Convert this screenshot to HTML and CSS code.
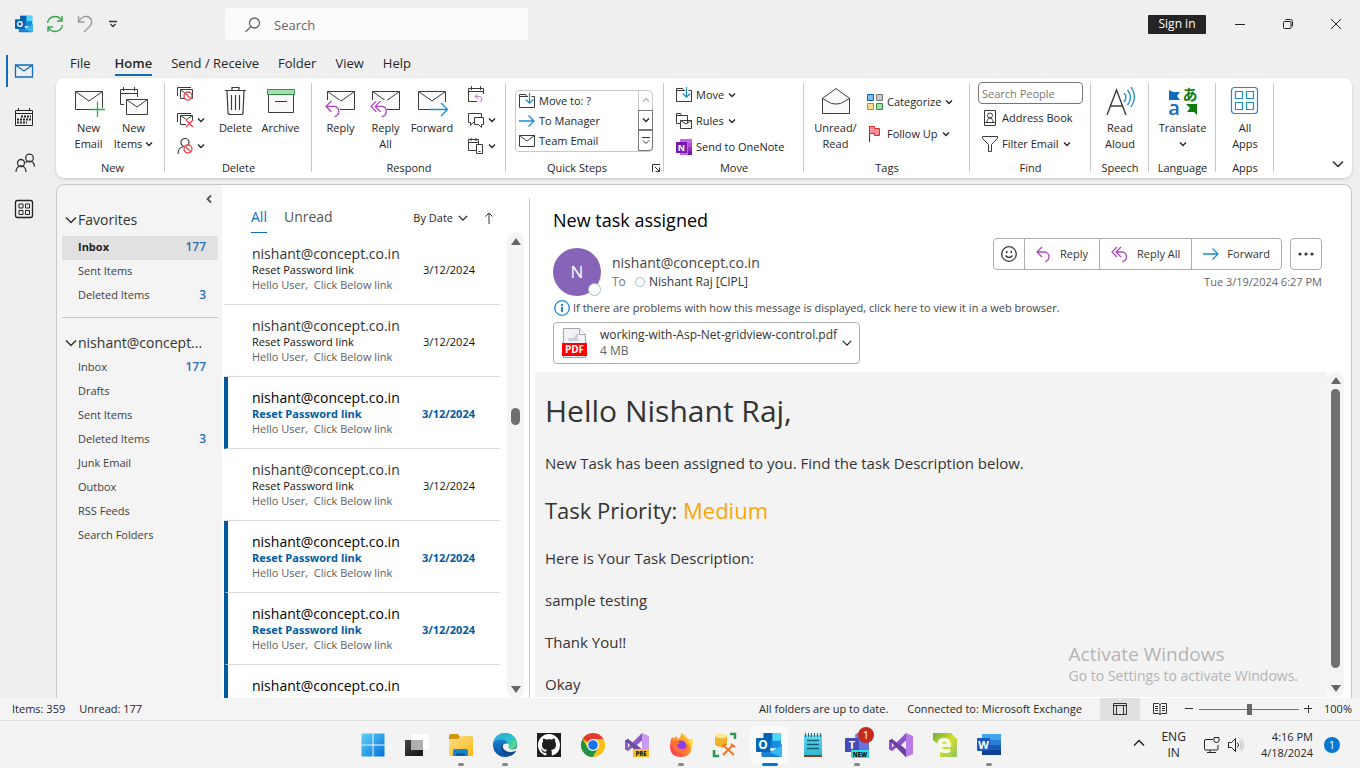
FILE: index.html
```html
<!DOCTYPE html>
<html lang="en">
<head>
<meta charset="utf-8">
<meta name="viewport" content="width=device-width, initial-scale=1">
<title>Inbox - Outlook</title>
<link rel="stylesheet" href="styles.css">
</head>
<body>
<svg class="defs" aria-hidden="true">
  <defs>
    <linearGradient id="g-win" x1="0" y1="0" x2="1" y2="1"><stop offset="0" stop-color="#5fd0fb"/><stop offset="1" stop-color="#0273d2"/></linearGradient>
    <linearGradient id="g-fold" x1="0" y1="0" x2="1" y2="1"><stop offset="0" stop-color="#ffe08a"/><stop offset="1" stop-color="#fbb81c"/></linearGradient>
    <linearGradient id="g-edge" x1="0" y1="0" x2="1" y2="1"><stop offset="0" stop-color="#2aa5dd"/><stop offset=".55" stop-color="#2fc3cb"/><stop offset="1" stop-color="#6ee35c"/></linearGradient>
    <linearGradient id="g-edge2" x1="0" y1="0" x2="0" y2="1"><stop offset="0" stop-color="#1b93dc"/><stop offset="1" stop-color="#0c4ea3"/></linearGradient>
    <linearGradient id="g-fox" x1="1" y1="0" x2="0" y2="1"><stop offset="0" stop-color="#ffe43c"/><stop offset=".45" stop-color="#ff9524"/><stop offset="1" stop-color="#f5255b"/></linearGradient>
    <linearGradient id="g-dark" x1="0" y1="0" x2="1" y2="1"><stop offset="0" stop-color="#444"/><stop offset="1" stop-color="#151515"/></linearGradient>
    <linearGradient id="g-note" x1="0" y1="0" x2="0" y2="1"><stop offset="0" stop-color="#63d8ec"/><stop offset="1" stop-color="#2eb6d3"/></linearGradient>
    <linearGradient id="g-green" x1="0" y1="0" x2="1" y2="1"><stop offset="0" stop-color="#6fae3c"/><stop offset=".5" stop-color="#cfe02a"/><stop offset="1" stop-color="#8fc46a"/></linearGradient>
  </defs>
  <symbol id="chev" viewBox="0 0 8 8"><path d="M1 2.500 4 5.500 7 2.500" fill="none" stroke="currentColor" stroke-width="1.400"/></symbol>
  <symbol id="chev-lg" viewBox="0 0 12 12"><path d="M1 3.500 6 8.500 11 3.500" fill="none" stroke="currentColor" stroke-width="1.500"/></symbol>
  <symbol id="mail" viewBox="0 0 32 32"><path d="M2.500 5.500h27v18h-27z" fill="#fafafa" stroke="#3b3b3b"/><path d="m2.500 5.500 13.500 9.500 13.500-9.500" fill="none" stroke="#3b3b3b"/></symbol>
  <symbol id="arrow-reply" viewBox="0 0 16 16"><path d="M6 1 1 6l5 5M1 6h8.500a5 5 0 0 1 0 9.500H9" fill="none" stroke="#b146c2" stroke-width="1.300"/></symbol>
  <symbol id="arrow-replyall" viewBox="0 0 18 16"><path d="M6 1 1 6l5 5M10 1 5 6l5 5M5 6h7a5 5 0 0 1 0 9.500h-1" fill="none" stroke="#b146c2" stroke-width="1.300"/></symbol>
  <symbol id="arrow-right" viewBox="0 0 16 16"><path d="M0 8h15M9.500 2.500 15 8l-5.500 5.500" fill="none" stroke="#1e8bcd" stroke-width="1.300"/></symbol>
  <symbol id="no" viewBox="0 0 10 10"><circle cx="5" cy="5" r="4" fill="#fff" stroke="#e8484d" stroke-width="1.300"/><path d="m2.200 2.200 5.600 5.600" stroke="#e8484d" stroke-width="1.300"/></symbol>
  <symbol id="move-folder" viewBox="0 0 16 16"><path d="M8 3.500 6.500 1.500h-6v13h15v-11h-3M8 3.500H.500M8 3.500h1" fill="none" stroke="#3b3b3b"/><path d="M10.500 0v10M6.800 6.500l3.700 3.700 3.700-3.700" fill="none" stroke="#1e8bcd" stroke-width="1.200"/></symbol>
  <symbol id="outlook" viewBox="0 0 24 24"><path d="M7 1h16v14H7z" fill="#1490df"/><path d="M15 1h8v7h-8z" fill="#50d9ff"/><path d="M7 1h8v7H7z" fill="#0a5fb0"/><path d="M7 8h8v6H7z" fill="#0f78d4"/><path d="m5 12 10 6 9-7v11a1 1 0 0 1-1 1H6a1 1 0 0 1-1-1z" fill="#1a80d4"/><path d="m24 12-11 7 10 4a1 1 0 0 0 1-1z" fill="#35b8f1"/><rect y="5.500" width="13" height="13" rx="1" fill="#0364b8"/><text x="6.500" y="16" class="logo-letter" fill="#fff">O</text></symbol>
</svg>

<header class="titlebar">
  <div class="quick">
    <svg width="18" height="18"><use href="#outlook"/></svg>
    <button aria-label="Send and receive"><svg width="18" height="18" viewBox="0 0 18 18" fill="none" stroke="#37a550" stroke-width="1.400"><path d="M1.500 8A7.500 7.500 0 0 1 15.500 5.500M16.500 10A7.500 7.500 0 0 1 2.500 12.500M16 1v5h-5M2 17v-5h5"/></svg></button>
    <button aria-label="Undo"><svg width="16" height="18" viewBox="0 0 16 18" fill="none" stroke="#9b9b9b" stroke-width="1.400"><path d="M1.500 1v6h6M1.500 7C4 3 7 1 10 1.500c5 1 6 6 3 9.500l-6 6"/></svg></button>
    <button aria-label="Customize toolbar"><svg width="8" height="8" viewBox="0 0 8 8" fill="none" stroke="#333" stroke-width="1.300"><path d="M0 1.500h8M1.500 4 4 6.500 6.500 4"/></svg></button>
  </div>
  <label class="search"><svg width="16" height="16" viewBox="0 0 16 16" fill="none" stroke="#666" stroke-width="1.300"><circle cx="9.500" cy="6" r="5"/><path d="M6 9.500.500 15"/></svg><input type="search" placeholder="Search" aria-label="Search"></label>
  <button class="signin">Sign in</button>
  <div class="wincontrols">
    <button aria-label="Minimize"><svg width="10" height="10" viewBox="0 0 10 10"><path d="M0 5.500h10" stroke="#222"/></svg></button>
    <button aria-label="Restore"><svg width="10" height="10" viewBox="0 0 10 10" fill="none" stroke="#222"><rect x=".5" y="2.500" width="7.500" height="7" rx="1"/><path d="M2.500.500h5a2 2 0 0 1 2 2v5"/></svg></button>
    <button aria-label="Close"><svg width="10" height="10" viewBox="0 0 10 10"><path d="m0 0 10 10M10 0 0 10" stroke="#222"/></svg></button>
  </div>
</header>

<div class="middle">
  <nav class="rail" aria-label="Modules">
    <a href="#mail" class="active" aria-label="Mail"><svg width="18" height="18" viewBox="0 0 18 18" fill="none" stroke="#0f6cbd" stroke-width="1.300"><path d="M.500 3h17v12H.500zM.500 3 9 9l8.500-6"/></svg></a>
    <a href="#calendar" aria-label="Calendar"><svg width="18" height="18" viewBox="0 0 18 18" fill="none" stroke="#242424"><path d="M.500 2.500h17v15H.500zM.500 5.500h17M3.500 0v3M14.500 0v3"/><path d="M6 8.500h10M2 11.500h14M2 14.500h10" stroke-width="2" stroke-dasharray="2 1"/></svg></a>
    <a href="#people" aria-label="People"><svg width="20" height="20" viewBox="0 0 20 20" fill="none" stroke="#333" stroke-width="1.300"><circle cx="6" cy="10" r="3.500"/><path d="M1 19c0-8 10-8 10 0"/><circle cx="14.500" cy="5" r="3.800"/><path d="M10.500 9.500c4-3 9-1 9 4"/></svg></a>
    <a href="#apps" aria-label="Apps"><svg width="18" height="18" viewBox="0 0 18 18" fill="none" stroke="#242424"><rect x=".5" y=".5" width="17" height="17" rx="2" stroke-width="1.300"/><path d="M4 4h4v4H4zM10.500 4h4v4h-4zM4 10.500h4v4H4zM10.500 10.500h4v4h-4z"/></svg></a>
  </nav>

  <div class="content">
    <nav class="tabs" aria-label="Ribbon tabs">
      <button>File</button><button class="active">Home</button><button>Send / Receive</button><button>Folder</button><button>View</button><button>Help</button>
    </nav>

    <div class="ribbon">
      <section class="group g-new">
        <div class="tools">
          <button class="big"><svg width="32" height="32" viewBox="0 0 32 32"><use href="#mail"/><path d="M17 24h15M24.500 16v15" stroke="#fff" stroke-width="4"/><path d="M16.500 23.500H32M24.500 15.500V31" stroke="#37a550" stroke-width="1.300"/></svg><span>New<br>Email</span></button>
          <button class="big"><svg width="32" height="32" viewBox="0 0 32 32" fill="#fafafa" stroke="#3b3b3b"><path d="M2.500 3.500h17v15h-17zM2.500 7.500h17M5.500 1v4M16.500 1v4"/><path d="M6 11h24v18H6z" fill="#fff" stroke="none"/><path d="M8.500 13.500h21v15h-21zM8.500 13.500 19 21l10.500-7.500"/></svg><span>New<br>Items <svg width="8" height="8"><use href="#chev"/></svg></span></button>
        </div><h2>New</h2>
      </section>
      <section class="group g-delete">
        <div class="tools">
          <div class="stack">
            <button aria-label="Ignore"><svg width="16" height="16" viewBox="0 0 16 16" fill="none" stroke="#3b3b3b"><path d="M.500 10V1.500H14M3.500 3.500h12v9h-12zM3.500 3.500 9 8"/><use href="#no" x="6" y="5" width="10" height="10"/></svg></button>
            <button aria-label="Clean up"><svg width="16" height="16" viewBox="0 0 16 16" fill="none" stroke="#3b3b3b"><path d="M.500 10V1.500H14M9 12.500H3.500v-9h12V8M3.500 3.500l6 4 6-4"/><path d="m9 8 7 7M16 8l-7 7" stroke="#e8484d" stroke-width="1.300"/></svg><svg width="8" height="8"><use href="#chev"/></svg></button>
            <button aria-label="Junk"><svg width="16" height="16" viewBox="0 0 16 16" fill="none" stroke="#3b3b3b" stroke-width="1.200"><circle cx="8" cy="4.500" r="4"/><path d="M1 16c0-4 2-7 5-7"/><use href="#no" x="6" y="6" width="10" height="10"/></svg><svg width="8" height="8"><use href="#chev"/></svg></button>
          </div>
          <button class="big"><svg width="32" height="32" viewBox="0 0 32 32" fill="none" stroke="#3b3b3b" stroke-width="1.200"><path d="M5 4.500h21M12 4V1.500h7V4M7 4.500l1 22q0 2 2 2h11q2 0 2-2l1-22M11.500 9v15M15.500 9v15M19.500 9v15"/></svg><span>Delete</span></button>
          <button class="big"><svg width="32" height="32" viewBox="0 0 32 32"><path d="M3.500 7.500h25v19h-25z" fill="#fafafa" stroke="#3b3b3b"/><path d="M2.500 3.500h27v5h-27z" fill="#a5dfb2" stroke="#309048"/><path d="M10 15.500h12" stroke="#3b3b3b"/></svg><span>Archive</span></button>
        </div><h2>Delete</h2>
      </section>
      <section class="group g-respond">
        <div class="tools">
          <button class="big"><svg width="32" height="32" viewBox="0 0 32 32"><use href="#mail"/><path d="M0 14h15v12H0z" fill="#fff"/><use href="#arrow-reply" x="0" y="14" width="17" height="17"/></svg><span>Reply</span></button>
          <button class="big"><svg width="32" height="32" viewBox="0 0 32 32"><use href="#mail"/><path d="M0 14h17v12H0z" fill="#fff"/><use href="#arrow-replyall" x="0" y="14" width="19" height="17"/></svg><span>Reply<br>All</span></button>
          <button class="big wide"><svg width="32" height="32" viewBox="0 0 32 32"><use href="#mail"/><path d="M14 22h18v5H14zM24 16h8v8h-8z" fill="#fff"/><path d="M14 23.500h17.500M25 17l6.500 6.500L25 30" fill="none" stroke="#1e8bcd" stroke-width="1.300"/></svg><span>Forward</span></button>
          <div class="stack">
            <button aria-label="Meeting"><svg width="16" height="16" viewBox="0 0 16 16" fill="none" stroke="#3b3b3b"><path d="M9 15.500H.500v-13h15V8M.500 5.500h15M3.500 0v4M12.500 0v4"/><use href="#arrow-reply" x="6" y="7" width="10" height="9"/></svg></button>
            <button aria-label="Messages"><svg width="16" height="16" viewBox="0 0 16 16" fill="#fff" stroke="#3b3b3b"><path d="M.500 1.500h13v9H5l-2.500 3v-3h-2z"/><path d="M6.500 5.500h9v7h-2v3l-3-3h-4z"/></svg><svg width="8" height="8"><use href="#chev"/></svg></button>
            <button aria-label="More respond actions"><svg width="16" height="16" viewBox="0 0 16 16" fill="#fff" stroke="#3b3b3b"><path d="M.500 1.500h10v11H.500zM.500 4.500h10M3 0v3M8 0v3"/><path d="M8.500 6.500h6v9h-6zM10.500 13.500h2"/></svg><svg width="8" height="8"><use href="#chev"/></svg></button>
          </div>
        </div><h2>Respond</h2>
      </section>
      <section class="group g-quick">
        <div class="quickbox">
          <div class="steps">
            <button><svg width="16" height="16"><use href="#move-folder"/></svg>Move to: ?</button>
            <button><svg width="16" height="16"><use href="#arrow-right"/></svg>To Manager</button>
            <button><svg width="16" height="16" viewBox="0 0 16 16" fill="none" stroke="#3b3b3b"><path d="M.500 2.500h15v11H.500zM.500 2.500 8 8l7.500-5.500"/></svg>Team Email</button>
          </div>
          <div class="spin">
            <button aria-label="Previous" disabled><svg class="flip" width="8" height="8"><use href="#chev"/></svg></button>
            <button aria-label="Next"><svg width="8" height="8"><use href="#chev"/></svg></button>
            <button aria-label="More quick steps"><svg width="8" height="8" viewBox="0 0 8 8" fill="none" stroke="#333"><path d="M0 .500h8M1 3.500l3 3 3-3"/></svg></button>
          </div>
        </div>
        <h2>Quick Steps</h2>
        <button class="launch" aria-label="Quick Steps settings"><svg width="8" height="8" viewBox="0 0 8 8" fill="none" stroke="#333"><path d="M.500 8V.500H8M2.500 2.500l5 5M7.500 3.500v4h-4"/></svg></button>
      </section>
      <section class="group g-move">
        <div class="list">
          <button><svg width="16" height="16"><use href="#move-folder"/></svg>Move <svg width="8" height="8"><use href="#chev"/></svg></button>
          <button><svg width="16" height="16" viewBox="0 0 16 16" fill="#fff" stroke="#3b3b3b"><path d="M.500 .500h4l1 2h6v8H.500zM.500 2.500h5"/><path d="M4.500 7.500h11v8h-11zM4.500 7.500 10 11l5.500-3.500"/></svg>Rules <svg width="8" height="8"><use href="#chev"/></svg></button>
          <button><svg width="16" height="16" viewBox="0 0 16 16"><path d="M4 0h12v16H4z" fill="#ca64ea"/><path d="M12 4h4v4h-4z" fill="#ae4bd5"/><path d="M12 8h4v4h-4z" fill="#9332bf"/><path d="M12 12h4v4h-4z" fill="#7719aa"/><path d="M0 3h11v11H0z" fill="#7719aa"/><text x="5.500" y="12" class="note-letter" fill="#fff">N</text></svg>Send to OneNote</button>
        </div><h2>Move</h2>
      </section>
      <section class="group g-tags">
        <div class="tools">
          <button class="big"><svg width="32" height="32" viewBox="0 0 32 32" fill="#fafafa" stroke="#3b3b3b"><path d="M2.500 12.500 16 2.500l13.500 10v15h-27z"/><path d="m2.500 12.500 9 5q4.500 1 9 0l9-5" fill="none"/></svg><span>Unread/<br>Read</span></button>
          <div class="list roomy">
            <button><svg width="16" height="16" viewBox="0 0 16 16"><path d="M.500.500h6v6h-6z" fill="#83beec" stroke="#0063b1"/><path d="M9.500.500h6v6h-6z" fill="#c8c8c8" stroke="#797774"/><path d="M.500 9.500h6v6h-6z" fill="#ffdb8c" stroke="#e07a10"/><path d="M9.500 9.500h6v6h-6z" fill="#a1ddaa" stroke="#309048"/></svg>Categorize <svg width="8" height="8"><use href="#chev"/></svg></button>
            <button><svg width="16" height="16" viewBox="0 0 16 16"><path d="M2.500 0v16" stroke="#3b3b3b"/><path d="M2.500.500h5v2h5v7h-5v-2h-5z" fill="#ff9198" stroke="#d92c20"/></svg>Follow Up <svg width="8" height="8"><use href="#chev"/></svg></button>
          </div>
        </div><h2>Tags</h2>
      </section>
      <section class="group g-find">
        <div class="list find">
          <input type="text" placeholder="Search People" aria-label="Search People">
          <button><svg width="16" height="16" viewBox="0 0 16 16" fill="none" stroke="#3b3b3b"><path d="M2.500.500h11v15h-11zM2.500 12.500h11M5 12c0-5 6-5 6 0"/><circle cx="8" cy="5.500" r="2.500"/></svg>Address Book</button>
          <button><svg width="16" height="16" viewBox="0 0 16 16" fill="none" stroke="#3b3b3b"><path d="M.500.500h15v2l-6 6v7h-3v-7l-6-6z"/></svg>Filter Email <svg width="8" height="8"><use href="#chev"/></svg></button>
        </div><h2>Find</h2>
      </section>
      <section class="group g-speech">
        <div class="tools"><button class="big"><svg width="32" height="32" viewBox="0 0 32 32" fill="none"><path d="M3 29 12.500 4 22 29M6 20h13" stroke="#3b3b3b" stroke-width="1.400"/><path d="M20 7q4 4 0 9M23.500 4q6 7 0 15M27 1q7 10 0 20" stroke="#1e8bcd" stroke-width="1.300"/></svg><span>Read<br>Aloud</span></button></div><h2>Speech</h2>
      </section>
      <section class="group g-language">
        <div class="tools"><button class="big"><svg width="32" height="32" viewBox="0 0 32 32"><path d="M2 4l4 2h7l-3 4 3 4H2z" fill="#0f6cbd"/><path d="M30 29v-11H19l4 4-3 4h7z" fill="#107c10"/><text x="7" y="29" class="tr-a" fill="#0f6cbd">a</text><text x="23" y="14" class="tr-ja" fill="#107c10">あ</text></svg><span>Translate<br><svg width="8" height="8"><use href="#chev"/></svg></span></button></div><h2>Language</h2>
      </section>
      <section class="group g-apps">
        <div class="tools"><button class="big"><svg width="32" height="32" viewBox="0 0 32 32" fill="none" stroke="#1e8bcd" stroke-width="1.200"><rect x="2.500" y="1.500" width="26" height="26" rx="3"/><path d="M6.500 5.500h7v7h-7zM17.500 5.500h7v7h-7zM6.500 16.500h7v7h-7zM17.500 16.500h7v7h-7z"/></svg><span>All<br>Apps</span></button></div><h2>Apps</h2>
      </section>
      <button class="collapse" aria-label="Collapse ribbon"><svg width="12" height="12"><use href="#chev-lg"/></svg></button>
    </div>

    <main class="workspace">
      <nav class="folders" aria-label="Folders">
        <button class="fold" aria-label="Collapse folder pane"><svg width="6" height="8" viewBox="0 0 6 8"><path d="M5 .500 1.500 4 5 7.500" fill="none" stroke="#555" stroke-width="1.800"/></svg></button>
        <h3><svg width="12" height="12"><use href="#chev-lg"/></svg>Favorites</h3>
        <ul>
          <li class="current"><a href="#inbox">Inbox</a><b>177</b></li>
          <li><a href="#sent">Sent Items</a></li>
          <li><a href="#deleted">Deleted Items</a><b>3</b></li>
        </ul>
        <hr>
        <h3><svg width="12" height="12"><use href="#chev-lg"/></svg>nishant@concept...</h3>
        <ul>
          <li><a href="#inbox">Inbox</a><b>177</b></li>
          <li><a href="#drafts">Drafts</a></li>
          <li><a href="#sent">Sent Items</a></li>
          <li><a href="#deleted">Deleted Items</a><b>3</b></li>
          <li><a href="#junk">Junk Email</a></li>
          <li><a href="#outbox">Outbox</a></li>
          <li><a href="#rss">RSS Feeds</a></li>
          <li><a href="#searches">Search Folders</a></li>
        </ul>
      </nav>

      <section class="messages" aria-label="Messages">
        <header>
          <button class="filter active">All</button><button class="filter">Unread</button>
          <button class="sort">By Date <svg width="10" height="10"><use href="#chev-lg"/></svg></button>
          <button aria-label="Oldest on top"><svg width="8" height="12" viewBox="0 0 8 12" fill="none" stroke="#333"><path d="M4 12V1M.500 4.500 4 1l3.500 3.500"/></svg></button>
        </header>
        <div class="scrollarea">
          <ol>
            <li><strong>nishant@concept.co.in</strong><p class="subject"><span>Reset Password link</span><time>3/12/2024</time></p><p>Hello User,&nbsp; Click Below link</p></li>
            <li><strong>nishant@concept.co.in</strong><p class="subject"><span>Reset Password link</span><time>3/12/2024</time></p><p>Hello User,&nbsp; Click Below link</p></li>
            <li class="unread"><strong>nishant@concept.co.in</strong><p class="subject"><span>Reset Password link</span><time>3/12/2024</time></p><p>Hello User,&nbsp; Click Below link</p></li>
            <li><strong>nishant@concept.co.in</strong><p class="subject"><span>Reset Password link</span><time>3/12/2024</time></p><p>Hello User,&nbsp; Click Below link</p></li>
            <li class="unread"><strong>nishant@concept.co.in</strong><p class="subject"><span>Reset Password link</span><time>3/12/2024</time></p><p>Hello User,&nbsp; Click Below link</p></li>
            <li class="unread"><strong>nishant@concept.co.in</strong><p class="subject"><span>Reset Password link</span><time>3/12/2024</time></p><p>Hello User,&nbsp; Click Below link</p></li>
            <li class="unread"><strong>nishant@concept.co.in</strong></li>
          </ol>
          <div class="scrollbar"><i class="up"></i><div class="track"><i class="thumb small"></i></div><i class="down"></i></div>
        </div>
      </section>

      <article class="reading">
        <div class="mailhead">
          <h1>New task assigned</h1>
          <div class="senderrow">
            <div class="avatar">N<i></i></div>
            <div class="who"><strong>nishant@concept.co.in</strong><p><span>To</span><i></i>Nishant Raj [CIPL]</p></div>
            <div class="actions">
              <div class="btnrow">
                <div class="joined">
                  <button aria-label="React"><svg width="16" height="16" viewBox="0 0 16 16" fill="none" stroke="#3b3b3b" stroke-width="1.300"><circle cx="8" cy="8" r="7.300"/><path d="M4.500 9.500q3.500 4 7 0"/><path d="M5 6h1.500M9.500 6H11" stroke-width="1.800"/></svg></button>
                  <button><svg width="16" height="16"><use href="#arrow-reply"/></svg>Reply</button>
                  <button><svg width="18" height="16"><use href="#arrow-replyall"/></svg>Reply All</button>
                  <button><svg width="16" height="16"><use href="#arrow-right"/></svg>Forward</button>
                </div>
                <button class="more" aria-label="More actions"><svg width="16" height="4" viewBox="0 0 16 4" fill="#333"><circle cx="2" cy="2" r="1.600"/><circle cx="8" cy="2" r="1.600"/><circle cx="14" cy="2" r="1.600"/></svg></button>
              </div>
              <time>Tue 3/19/2024 6:27 PM</time>
            </div>
          </div>
          <p class="info"><svg width="16" height="16" viewBox="0 0 16 16"><circle cx="8" cy="8" r="7.300" fill="none" stroke="#1e8bcd" stroke-width="1.300"/><path d="M8 4v2M8 7v5" stroke="#1e8bcd" stroke-width="2"/></svg>If there are problems with how this message is displayed, click here to view it in a web browser.</p>
          <button class="attachment">
            <svg width="26" height="32" viewBox="0 0 26 32"><path d="M1.500 1.500h16l6 6v23h-22z" fill="#f2f3f6" stroke="#a2a5ad"/><path d="M17.500 1.500v6h6" fill="#fff" stroke="#a2a5ad"/><path d="M6 14q0-4 3-3t5-4q3-1 2 3t3 4z" fill="#cdd1d8"/><path d="M0 16h25v13H0z" fill="#f00"/><text x="12.500" y="26" class="pdf" fill="#fff">PDF</text></svg>
            <span>working-with-Asp-Net-gridview-control.pdf<small>4 MB</small></span>
            <svg width="10" height="10"><use href="#chev-lg"/></svg>
          </button>
        </div>
        <div class="bodyrow">
          <div class="mailbody">
            <h1>Hello Nishant Raj,</h1>
            <p>New Task has been assigned to you. Find the task Description below.</p>
            <h2>Task Priority: <em>Medium</em></h2>
            <p>Here is Your Task Description:</p>
            <p>sample testing</p>
            <p>Thank You!!</p>
            <p>Okay</p>
          </div>
          <div class="scrollbar"><i class="up"></i><div class="track"><i class="thumb large"></i></div><i class="down"></i></div>
          <div class="watermark"><strong>Activate Windows</strong><span>Go to Settings to activate Windows.</span></div>
        </div>
      </article>
    </main>
  </div>
</div>

<footer class="status">
  <span>Items: 359</span><span>Unread: 177</span>
  <span class="sync">All folders are up to date.</span><span class="conn">Connected to: Microsoft Exchange</span>
  <button class="view on" aria-label="Normal view"><svg width="14" height="12" viewBox="0 0 14 12" fill="none" stroke="#333"><path d="M.500.500h13v11H.500zM.500 2.500h13M3.500 2.500v9M10.500 2.500v9"/></svg></button>
  <button class="view" aria-label="Reading view"><svg width="14" height="12" viewBox="0 0 14 12" fill="none" stroke="#333"><path d="M.500.500h5L7 1.500 8.500.500h5v10h-5L7 12l-1.500-1.500h-5zM7 1.500V12M2 3.500h3M2 5.500h3M2 7.500h3M9 3.500h3M9 5.500h3M9 7.500h3"/></svg></button>
  <button class="step" aria-label="Zoom out"><svg width="8" height="8" viewBox="0 0 8 8"><path d="M0 3.500h8" stroke="#333"/></svg></button>
  <input type="range" min="0" max="100" value="50" aria-label="Zoom">
  <button class="step" aria-label="Zoom in"><svg width="8" height="8" viewBox="0 0 8 8"><path d="M0 3.500h8M4.500 0v8" stroke="#333"/></svg></button>
  <span class="pct">100%</span>
</footer>

<footer class="taskbar">
  <div class="apps">
    <button aria-label="Start"><svg width="24" height="24" viewBox="0 0 24 24" fill="url(#g-win)"><path d="M.500.500h11v11H.500zM12.500.500h11v11h-11zM.500 12.500h11v11H.500zM12.500 12.500h11v11h-11z"/></svg></button>
    <button aria-label="Task view"><svg width="24" height="24" viewBox="0 0 24 24"><path d="M0 7h18v16H0z" fill="url(#g-dark)"/><path d="M6 1h18v16H6z" fill="#fff" opacity=".85"/><path d="M6 7h12v10H6z" fill="#b0b0b0"/></svg></button>
    <button class="run" aria-label="File Explorer"><svg width="24" height="24" viewBox="0 0 24 24"><path d="M0 3q0-2 2-2h7l2 3v3H0z" fill="#d89208"/><path d="M0 6h9l3-3h11l1 1v18l-1 1H1l-1-1z" fill="url(#g-fold)"/><path d="M4 18q0-2 2-2h11q2 0 2 2v5H4z" fill="#1786cf"/><path d="M7 20h9v3H7z" fill="#0a5c9b"/></svg></button>
    <button class="run" aria-label="Edge"><svg width="24" height="24" viewBox="0 0 24 24"><circle cx="12" cy="12" r="12" fill="url(#g-edge2)"/><path d="M0 10C2 3 7 0 12 0c8 0 12 6 12 10 0 4-3 6-6 6-4 0-5-2-3-4 0-7-12-7-15-2z" fill="url(#g-edge)"/><path d="M9 11c-2 5 1 12 8 12 3-1 5-3 6-5-6 3-12 0-12-5z" fill="#114a8b"/><path d="M10 12c-1 4 3 7 8 7 2 0 4-1 5-2l2-3c-4 4-12 3-9-2-1-2-4-2-6 0z" fill="#f3f3f3"/></svg></button>
    <button aria-label="GitHub"><svg width="24" height="24" viewBox="0 0 24 24"><path d="M0 0h24v24H0z" fill="#201d1e"/><path transform="translate(1 1) scale(1.375)" fill="#fff" d="M8 0C3.580 0 0 3.580 0 8c0 3.540 2.290 6.530 5.470 7.590.4.070.55-.17.55-.38 0-.19-.01-.82-.01-1.490-2.010.37-2.530-.49-2.690-.94-.09-.23-.48-.94-.82-1.130-.28-.15-.68-.52-.01-.53.63-.01 1.080.58 1.230.82.72 1.210 1.870.87 2.330.66.070-.52.28-.87.51-1.070-1.780-.2-3.640-.89-3.640-3.950 0-.87.31-1.590.82-2.150-.08-.2-.36-1.020.08-2.120 0 0 .67-.21 2.200.82.64-.18 1.320-.27 2-.27.68 0 1.360.09 2 .27 1.530-1.040 2.200-.82 2.200-.82.44 1.100.16 1.920.08 2.120.51.56.82 1.270.82 2.150 0 3.070-1.870 3.750-3.650 3.950.29.25.54.73.54 1.480 0 1.070-.01 1.930-.01 2.200 0 .21.15.46.55.38A8.010 8.010 0 0 0 16 8c0-4.420-3.580-8-8-8z"/></svg></button>
    <button aria-label="Chrome"><svg width="24" height="24" viewBox="0 0 24 24"><circle cx="12" cy="12" r="12" fill="#fbc116"/><path d="M12 12 1.600 6A12 12 0 0 1 22.400 6z" fill="#e33b2e"/><path d="M1.600 6A12 12 0 0 0 12 24l5.200-9L12 12l-5.200 3z" fill="#229342"/><path d="M12 6h10.400q3 6 0 12L12 24l5.200-9z" fill="#fbc116"/><circle cx="12" cy="12" r="6" fill="#fff"/><circle cx="12" cy="12" r="4.800" fill="#1a73e8"/></svg></button>
    <button aria-label="Visual Studio Preview"><svg width="24" height="24" viewBox="0 0 24 24"><path fill-rule="evenodd" d="M17 0v24L7.500 14.500 3 18l-3-1.500v-9L3 6l4.500 3.500zM17 7.500 12 12l5 4.500zM3 9.500v5L5.200 12z" fill="#8a5cc4"/><path d="m0 7.500 3-1.500 14 11v7L3 10z" fill="#6b4da0"/><path d="M17 0l7 3v18l-7 3z" fill="#c89bf5"/><path d="M8 16h16v8H8z" fill="#f9be25"/><text x="16" y="22.500" class="pre" fill="#222">PRE</text></svg></button>
    <button class="run" aria-label="Firefox"><svg width="24" height="24" viewBox="0 0 24 24"><path d="M2 6 4 4l1 2 2-3 2 3q3-2 3-6 5 2 6 5 4 2 5 6 0 13-11 13T1 13z" fill="url(#g-fox)"/><circle cx="12" cy="13" r="5.500" fill="#8a40e8"/><path d="M5 8q4 0 6 2l-3 2q1 4 5 4 5 0 5-5l2 3q-1 6-8 6-9-2-7-12z" fill="#ff7139"/><path d="M14 1q5 3 5 8 4-2 3-5 4 6 0 10-2-7-8-13z" fill="#ffdc3e"/></svg></button>
    <button aria-label="Database tool"><svg width="24" height="24" viewBox="0 0 24 24"><path d="M2 3v9q6 4 12 0V3z" fill="#f2b229"/><ellipse cx="8" cy="3" rx="6" ry="2.500" fill="#ffe394"/><path d="M17 1h5v5M1 17v6h5" fill="none" stroke="#2f9750" stroke-width="2.500"/><path d="m10 12 11 10M20 12 10 22" stroke="#ef7322" stroke-width="1.800"/><path d="m9 14 4-3M18 11l4 3" stroke="#ef7322" stroke-width="2"/></svg></button>
    <button class="open" aria-label="Outlook"><svg width="26" height="26"><use href="#outlook"/></svg></button>
    <button aria-label="Notepad"><svg width="24" height="24" viewBox="0 0 24 24"><path d="M3 2h18v21H3z" fill="url(#g-note)"/><path d="M3 22h18v2H3z" fill="#8e3d1c"/><path d="M4.500 0v4M7.500 0v4M10.500 0v4M13.500 0v4M16.500 0v4M19.500 0v4" stroke="#176c7d"/><path d="M6 7.500h12M6 11.500h12M6 15.500h12" stroke="#175d78" stroke-width="1.500"/></svg></button>
    <button class="run" aria-label="Teams"><svg width="24" height="24" viewBox="0 0 24 24"><rect x="6" y="6" width="18" height="16" rx="2" fill="#6871df"/><circle cx="13" cy="3" r="3" fill="#7780e0"/><rect y="5" width="14" height="14" rx="1" fill="#444bb4"/><text x="7" y="16" class="logo-letter" fill="#fff">T</text><rect x="6" y="17" width="18" height="8" rx="1" fill="#2ce2e3"/><text x="15" y="23.500" class="pre" fill="#111">NEW</text></svg><i class="badge">1</i></button>
    <button aria-label="Visual Studio"><svg width="24" height="24" viewBox="0 0 24 24"><path fill-rule="evenodd" d="M17 0v24L7.500 14.500 3 18l-3-1.500v-9L3 6l4.500 3.500zM17 7.500 12 12l5 4.500zM3 9.500v5L5.200 12z" fill="#9050cc"/><path d="m0 7.500 3-1.500 14 11v7L3 10z" fill="#68419b"/><path d="M17 0l7 3v18l-7 3z" fill="#b67be8"/></svg></button>
    <button aria-label="Editor"><svg width="24" height="24" viewBox="0 0 24 24"><path d="M0 0h18l6 6v18H7V13L0 7z" fill="url(#g-green)"/><text x="11" y="20" class="e-letter" fill="#f5f8e8">e</text></svg></button>
    <button class="run" aria-label="Word"><svg width="24" height="24" viewBox="0 0 24 24"><path d="M5 1h19v6H5z" fill="#41a5ee"/><path d="M5 7h19v5H5z" fill="#2b7cd3"/><path d="M5 12h19v5H5z" fill="#185abd"/><path d="M5 17h19v5H5z" fill="#103f91"/><rect y="5" width="13" height="13" rx="1" fill="#185abd"/><text x="6.500" y="15.500" class="logo-letter" fill="#fff">W</text></svg></button>
  </div>
  <div class="tray">
    <button aria-label="Hidden icons"><svg class="flip" width="12" height="12"><use href="#chev-lg"/></svg></button>
    <button class="lang">ENG<br>IN</button>
    <button class="net" aria-label="Network and volume"><svg width="16" height="16" viewBox="0 0 16 16" fill="none" stroke="#222"><path d="M9 2.500H2q-1.500 0-1.500 1.500v7.500q0 1.500 1.500 1.500h11q1 0 1-1V8M3 15.500h9M6 13v2M10 .500h5v3q0 2-2.500 2T10 3.500z"/></svg><svg width="16" height="16" viewBox="0 0 16 16" fill="none" stroke="#222"><path d="M1.500 5.500h3l4-4v13l-4-4h-3z"/><path d="M10.500 5.500q2 2.500 0 5"/><path d="M12.500 3.500q3 4.500 0 9M14 2q4 6 0 12" stroke="#bbb"/></svg></button>
    <button class="clock">4:16 PM<br>4/18/2024</button>
    <button class="count">1</button>
  </div>
</footer>
</body>
</html>
```

FILE: styles.css
```css
:root {
  --ink: #262626;
  --muted: #5f5f5f;
  --blue: #0f6cbd;
  --line: #c9c9c9;
}
* { box-sizing: border-box; }
body {
  margin: 0;
  height: 100vh;
  display: flex;
  flex-direction: column;
  overflow: hidden;
  background: #efefef;
  color: var(--ink);
  font: 12px/16px "Open Sans", "Noto Sans", sans-serif;
}
button, input { font: inherit; color: inherit; }
button { border: 0; padding: 0; background: none; white-space: nowrap; }
h1, h2, h3, p, ul, ol { margin: 0; padding: 0; font-weight: 400; }
ul, ol { list-style: none; }
a { color: inherit; text-decoration: none; }
svg { flex: none; overflow: visible; }
symbol { overflow: visible; }
.defs { position: absolute; width: 0; height: 0; }
.flip { transform: rotate(180deg); }
.logo-letter { font: 700 11px "Open Sans", sans-serif; text-anchor: middle; }
.note-letter { font: 700 9px "Open Sans", sans-serif; text-anchor: middle; }
.pdf { font: 700 10px "Open Sans", sans-serif; text-anchor: middle; }
.pre { font: 800 6px "Open Sans", sans-serif; text-anchor: middle; }
.e-letter { font: 800 26px "Open Sans", sans-serif; text-anchor: middle; }
.tr-a { font: 600 20px "Open Sans", sans-serif; text-anchor: middle; }
.tr-ja { font: 700 15px "Noto Sans CJK JP", sans-serif; text-anchor: middle; }

.titlebar { flex: none; height: 48px; display: flex; align-items: center; }
.quick { display: flex; align-items: center; gap: 13px; width: 225px; padding-left: 15px; }
.quick button { display: flex; }
.quick button:last-child { margin-left: 3px; }
.search {
  width: 303px; height: 32px; margin-right: auto; padding: 1px 0 0 20px;
  display: flex; align-items: center; gap: 11px;
  background: #fbfbfb; border-radius: 4px;
}
.search input { flex: 1; min-width: 0; border: 0; background: none; outline: 0; font-size: 13px; }
.search input::placeholder { color: #666; }
.signin { background: #242424; color: #fff; width: 58px; height: 19px; border-radius: 1px; margin-right: 10px; }
.wincontrols { display: flex; }
.wincontrols button { width: 48px; height: 48px; display: grid; place-items: center; }

.middle { flex: 1; min-height: 0; display: flex; }
.rail { width: 56px; flex: none; display: flex; flex-direction: column; gap: 14px; padding-top: 7px; }
.rail a { height: 32px; display: flex; align-items: center; padding-left: 15px; }
.rail a.active { margin-left: 6px; padding-left: 7px; border-left: 2px solid #0f6cbd; }
.content { flex: 1; min-width: 0; display: flex; flex-direction: column; padding-right: 8px; }

.tabs { flex: none; height: 30px; display: flex; align-items: flex-start; gap: 19px; padding: 4px 14px 0; font-size: 13px; line-height: 22px; }
.tabs button { border-bottom: 2px solid transparent; }
.tabs button:first-child { margin-right: 5px; }
.tabs .active { font-weight: 600; border-color: #0f6cbd; }

.ribbon { flex: none; min-height: 100px; display: flex; position: relative; background: #fff; border-radius: 8px; box-shadow: 0 1px 3px #0000002e; margin-bottom: 6px; font-size: 11px; }
.group { flex: none; position: relative; display: flex; flex-direction: column; padding: 4px 0 2px; }
.group::after { content: ""; position: absolute; right: 0; top: 5px; bottom: 6px; width: 1px; background: var(--line); }
.group h2 { margin-top: auto; font-size: 11px; line-height: 16px; text-align: center; }
.tools { display: flex; padding-top: 4px; }
.g-new { width: 109px; } .g-delete { width: 147px; } .g-respond { width: 194px; }
.g-quick { width: 158px; } .g-move { width: 140px; } .g-tags { width: 166px; }
.g-find { width: 121px; } .g-speech { width: 58px; } .g-language { width: 67px; } .g-apps { width: 58px; }
.big { width: 45px; display: flex; flex-direction: column; align-items: center; gap: 2px; }
.big.wide { width: 48px; }
.g-new .tools { padding-left: 10px; }
.g-new h2 { padding-left: 4px; }
.g-delete .tools { padding-left: 12px; }
.g-delete .stack { width: 36px; }
.g-respond .tools { padding-left: 6px; }
.g-respond .stack { padding-left: 12px; }
.g-tags .big { width: 63px; }
.g-speech .big, .g-language .big, .g-apps .big { width: 100%; }
.stack { display: flex; flex-direction: column; gap: 10px; }
.stack button { display: flex; align-items: center; gap: 4px; }

.g-quick h2 { padding-right: 16px; }
.quickbox { display: flex; width: 138px; margin: 8px 0 0 9px; border: 1px solid var(--line); border-radius: 4px; }
.steps { flex: 1; display: flex; flex-direction: column; }
.steps button { height: 20px; padding-left: 3px; display: flex; align-items: center; gap: 4px; }
.spin { width: 14px; display: flex; flex-direction: column; border-left: 1px solid var(--line); }
.spin button { flex: 1; display: grid; place-items: center; }
.spin button:disabled { color: #b5b5b5; }
.spin button + button { border: 1px solid #777; margin: 0 -1px; }
.spin button:last-child { border-radius: 0 0 4px; }
.launch { position: absolute; right: 4px; bottom: 6px; display: flex; }

.list { display: flex; flex-direction: column; gap: 10px; padding: 5px 0 0 12px; }
.list button { display: flex; align-items: center; gap: 4px; height: 16px; }
.list.roomy { gap: 16px; padding: 8px 0 0; }
.list.find { padding: 0 0 0 12px; }
.find input { width: 105px; height: 22px; margin-left: -4px; margin-bottom: -4px; padding: 0 3px; border: 1px solid #777; border-radius: 4px; background: #fff; }
.find input::placeholder { color: #777; }
.collapse { position: absolute; right: 8px; bottom: 8px; display: flex; }

.workspace { flex: 1; min-height: 0; display: flex; background: #fff; border: 1px solid var(--line); border-bottom: 0; border-radius: 8px 8px 0 0; overflow: hidden; }
.folders { flex: none; width: 165px; background: #f4f4f4; padding: 10px 4px 0 5px; color: #404040; }
.fold { display: flex; margin: 0 6px 6px auto; }
.folders h3 { display: flex; align-items: center; gap: 1px; padding-left: 3px; height: 22px; font-size: 14px; color: #333; }
.folders ul { margin-top: 5px; }
.folders li { height: 24px; display: flex; align-items: center; justify-content: space-between; padding: 0 12px 2px 16px; font-size: 11px; }
.folders li b { font-size: 12px; font-weight: 600; color: #2b6cb5; }
.folders .current { background: #e1e1e1; font-weight: 700; color: #222; }
.folders hr { margin: 9px 0 14px; border: 0; border-top: 1px solid var(--line); }
.folders hr ~ ul { margin-top: 2px; }

.messages { flex: none; width: 308px; position: relative; display: flex; flex-direction: column; }
.messages::after { content: ""; position: absolute; right: 0; top: 13px; bottom: 0; width: 1px; background: var(--line); }
.messages header { flex: none; height: 48px; padding: 20px 37px 0 29px; display: flex; align-items: flex-start; gap: 17px; }
.filter { font-size: 14px; line-height: 24px; height: 28px; padding: 0 0 4px; color: #555; display: flex; align-items: center; }
.filter.active { color: #0f6cbd; border-bottom: 1px solid #0f6cbd; }
.sort { margin-left: auto; display: flex; align-items: center; gap: 5px; font-size: 11px; line-height: 26px; }
.messages header button:last-child { padding-top: 7px; display: flex; }
.scrollarea { flex: 1; min-height: 0; display: flex; justify-content: space-between; padding-right: 6px; }
.messages ol { width: 276px; margin-left: 2px; overflow: hidden; }
.messages li { height: 72px; padding: 13px 25px 0 28px; border-bottom: 1px solid #dcdcdc; }
.messages li strong { display: block; font-weight: 400; font-size: 14px; line-height: 16px; color: #333; }
.messages li p { display: flex; justify-content: space-between; font-size: 11px; line-height: 15px; color: var(--muted); }
.messages li .subject { color: #111; }
.messages .unread { border-left: 4px solid #005a9e; padding-left: 24px; }
.messages .unread strong { color: #000; }
.messages .unread .subject { color: #005a9e; font-weight: 700; }

.scrollbar { flex: none; width: 17px; background: #f4f4f4; border-radius: 8px; display: flex; flex-direction: column; align-items: center; padding: 5px 0; }
.track { flex: 1; min-height: 0; padding: 5px 0; }
.thumb { display: block; width: 9px; border-radius: 5px; background: #707070; }
.thumb.small { height: 17px; margin-top: 158px; }
.thumb.large { height: 96%; }
.up, .down { border: 5px solid transparent; border-top: 0; border-bottom: 7px solid #666; }
.down { border-bottom: 0; border-top: 7px solid #666; }

.reading { flex: 1; min-width: 0; display: flex; flex-direction: column; }
.mailhead { padding: 21px 29px 0 23px; }
.mailhead h1 { font-size: 18px; line-height: 28px; color: #000; }
.senderrow { display: flex; margin-top: 4px; min-height: 60px; }
.avatar { position: relative; width: 48px; height: 48px; margin-top: 10px; border-radius: 50%; background: #8764b8; color: #fff; font-size: 17px; line-height: 48px; text-align: center; }
.avatar i { position: absolute; right: 0; bottom: 0; width: 13px; height: 13px; border: 1px solid #a5bcc6; border-radius: 50%; background: #fff; }
.who { padding: 15px 0 0 11px; flex: 1; }
.who strong { display: block; font-weight: 400; font-size: 14px; line-height: 20px; color: #444; }
.who p { display: flex; align-items: center; line-height: 18px; color: #333; font-size: 12px; }
.who span { width: 23px; color: #777; }
.who i { width: 10px; height: 10px; border: 1px solid #a5bcc6; border-radius: 50%; margin-right: 4px; }
.actions { display: flex; flex-direction: column; align-items: flex-end; gap: 4px; color: #666; font-size: 11px; }
.btnrow { display: flex; gap: 8px; color: #333; }
.joined, .more { height: 32px; border: 1px solid #aeaeae; border-radius: 4px; display: flex; }
.joined button { display: flex; align-items: center; gap: 8px; padding: 0 11px; }
.joined button:first-child { padding: 0 7px; }
.joined button + button { border-left: 1px solid #aeaeae; }
.more { width: 32px; align-items: center; justify-content: center; }
.info { display: flex; align-items: center; gap: 3px; font-size: 11px; line-height: 16px; padding: 2px 0 6px 1px; color: #444; }
.attachment { display: flex; align-items: center; gap: 12px; width: 307px; height: 42px; padding: 0 7px 0 8px; border: 1px solid #aeaeae; border-radius: 4px; text-align: left; }
.attachment span { flex: 1; width: 0; font-size: 12px; color: #333; }
.attachment small { display: block; font-size: 12px; color: #666; }
.bodyrow { position: relative; flex: 1; min-height: 0; display: flex; margin: 8px 7px 1px 5px; }
.mailbody { flex: 1; overflow: hidden; background: #f3f3f3; padding: 17px 10px 0; color: #333; font-size: 15px; line-height: 22px; }
.mailbody h1 { font-size: 30px; line-height: 44px; margin-bottom: 19px; }
.mailbody h2 { font-size: 22px; line-height: 32px; margin: 20px 0 21px; }
.mailbody em { font-style: normal; color: #ffa500; }
.mailbody p + p { margin-top: 20px; }
.watermark { position: absolute; right: 46px; bottom: 10px; color: #b4b4b4; font-size: 14px; line-height: 22px; }
.watermark strong, .watermark span { display: block; font-weight: 400; }
.watermark strong { font-size: 19px; }

.status { flex: none; height: 23px; display: flex; align-items: center; background: #f4f4f4; border-bottom: 1px solid #dedede; font-size: 11px; padding: 0 8px 0 12px; }
.status > span { margin-right: 14px; }
.status .sync { margin-left: auto; margin-right: 19px; }
.status .conn { margin-right: 18px; }
.view { width: 40px; height: 22px; display: grid; place-items: center; }
.view.on { background: #e0e0e0; }
.step { display: flex; width: 14px; justify-content: center; margin: 0 0 0 2px; }
.status input { appearance: none; width: 100px; height: 12px; margin: 0 0 0 3px; background: linear-gradient(#777, #777) center / 100% 1px no-repeat; }
.status input::-webkit-slider-thumb { appearance: none; width: 5px; height: 11px; background: #666; }
.status > .pct { margin: 0 0 0 9px; }

.taskbar { flex: none; height: 47px; display: grid; grid-template-columns: 1fr auto 1fr; background: #f3f3f3; }
.apps { grid-column: 2; display: flex; align-items: center; padding-left: 2px; }
.apps button { position: relative; width: 44px; height: 44px; display: grid; place-items: center; }
.apps .run::after, .apps .open::after { content: ""; position: absolute; left: 19px; bottom: 1px; width: 6px; height: 3px; border-radius: 2px; background: #868686; }
.apps .open { background: #fafafa; border: 3px solid #f3f3f3; border-radius: 8px; }
.apps .open::after { left: 12px; width: 16px; bottom: -2px; background: #0078d4; }
.badge { position: absolute; right: 5px; top: 4px; width: 16px; height: 16px; border-radius: 50%; background: #c42b1c; color: #fff; font: 11px/16px "Open Sans", sans-serif; }
.tray { display: flex; align-items: center; justify-content: flex-end; padding-right: 20px; font-size: 11px; }
.tray .lang { margin-left: 16px; font-size: 12px; }
.net { display: flex; gap: 7px; margin-left: 18px; }
.clock { text-align: right; margin: 0 11px 0 18px; }
.count { width: 16px; height: 16px; border-radius: 50%; background: #0078d4; color: #fff; line-height: 16px; }
```
